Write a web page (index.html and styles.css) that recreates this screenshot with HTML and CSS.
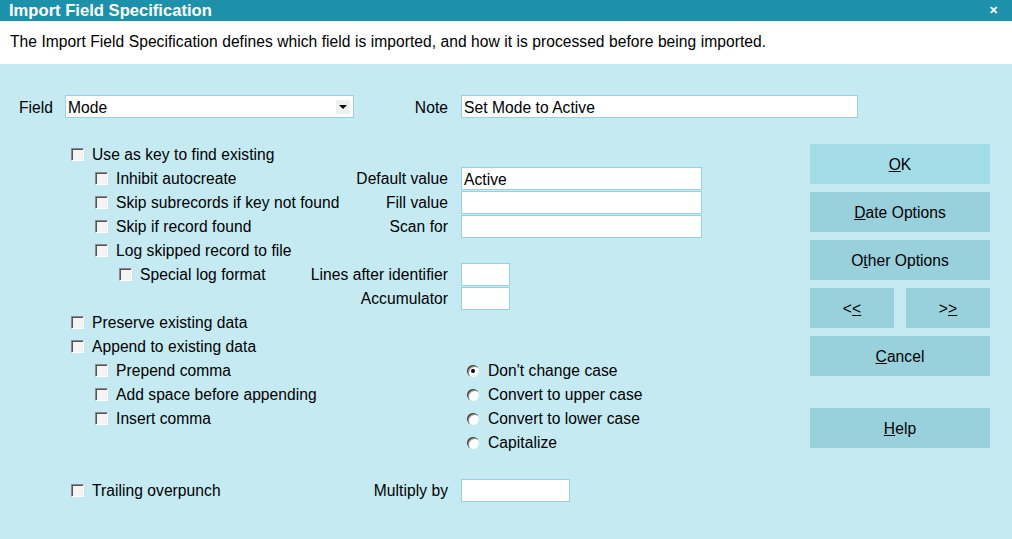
FILE: index.html
```html
<!DOCTYPE html>
<html>
<head>
<meta charset="utf-8">
<link rel="stylesheet" href="styles.css">
</head>
<body>
<div class="window">
  <div class="titlebar">
    <span class="title">Import Field Specification</span>
    <span class="close">&#x2715;</span>
  </div>
  <div class="desc">The Import Field Specification defines which field is imported, and how it is processed before being imported.</div>
  <div class="content">
    <div class="fieldrow">
      <span class="flabel">Field</span>
      <div class="combo"><span class="combo-text">Mode</span><span class="combo-btn"><span class="tri"></span></span></div>
      <span class="rlabel">Note</span>
      <div class="input note">Set Mode to Active</div>
    </div>
    <div class="main">
      <div class="form">
        <div class="cell"><label class="cb l0"><span class="box"></span>Use as key to find existing</label></div>
        <div class="cell2"></div>

        <div class="cell"><label class="cb l1"><span class="box"></span>Inhibit autocreate</label><span class="rlabel">Default value</span></div>
        <div class="cell2"><div class="input w241">Active</div></div>

        <div class="cell"><label class="cb l1"><span class="box"></span>Skip subrecords if key not found</label><span class="rlabel">Fill value</span></div>
        <div class="cell2"><div class="input w241"></div></div>

        <div class="cell"><label class="cb l1"><span class="box"></span>Skip if record found</label><span class="rlabel">Scan for</span></div>
        <div class="cell2"><div class="input w241"></div></div>

        <div class="cell"><label class="cb l1"><span class="box"></span>Log skipped record to file</label></div>
        <div class="cell2"></div>

        <div class="cell"><label class="cb l2"><span class="box"></span>Special log format</label><span class="rlabel">Lines after identifier</span></div>
        <div class="cell2"><div class="input w49"></div></div>

        <div class="cell"><span class="rlabel">Accumulator</span></div>
        <div class="cell2"><div class="input w49"></div></div>

        <div class="cell"><label class="cb l0"><span class="box"></span>Preserve existing data</label></div>
        <div class="cell2"></div>

        <div class="cell"><label class="cb l0"><span class="box"></span>Append to existing data</label></div>
        <div class="cell2"></div>

        <div class="cell"><label class="cb l1"><span class="box"></span>Prepend comma</label></div>
        <div class="cell2"><label class="rb"><span class="radio on"></span>Don't change case</label></div>

        <div class="cell"><label class="cb l1"><span class="box"></span>Add space before appending</label></div>
        <div class="cell2"><label class="rb"><span class="radio"></span>Convert to upper case</label></div>

        <div class="cell"><label class="cb l1"><span class="box"></span>Insert comma</label></div>
        <div class="cell2"><label class="rb"><span class="radio"></span>Convert to lower case</label></div>

        <div class="cell"></div>
        <div class="cell2"><label class="rb"><span class="radio"></span>Capitalize</label></div>

        <div class="cell"></div>
        <div class="cell2"></div>

        <div class="cell"><label class="cb l0"><span class="box"></span>Trailing overpunch</label><span class="rlabel">Multiply by</span></div>
        <div class="cell2"><div class="input w109"></div></div>
      </div>
      <div class="buttons">
        <div class="btn default"><span class="u">O</span>K</div>
        <div class="btn"><span class="u">D</span>ate Options</div>
        <div class="btn">O<span class="u">t</span>her Options</div>
        <div class="btnpair">
          <div class="btn half">&lt;<span class="u">&lt;</span></div>
          <div class="btn half">&gt;<span class="u">&gt;</span></div>
        </div>
        <div class="btn"><span class="u">C</span>ancel</div>
        <div class="btn help"><span class="u">H</span>elp</div>
      </div>
    </div>
  </div>
</div>
</body>
</html>
```

FILE: styles.css
```css
* { box-sizing: border-box; }
html, body {
  margin: 0;
  padding: 0;
}
body {
  width: 1012px;
  height: 539px;
  overflow: hidden;
  font-family: "Liberation Sans", Arial, sans-serif;
  font-size: 15.6px;
  letter-spacing: 0.05px;
  color: #000;
  background: #c5eaf2;
}
.window {
  display: flex;
  flex-direction: column;
  height: 539px;
}
.titlebar {
  height: 21px;
  background: #1e91aa;
  color: #fff;
  display: flex;
  align-items: center;
  justify-content: space-between;
  padding: 0 14px 0 9px;
}
.title {
  font-weight: bold;
  font-size: 16.6px;
  letter-spacing: 0;
}
.close {
  font-weight: bold;
  font-size: 11px;
}
.desc {
  height: 43px;
  background: #fff;
  display: flex;
  align-items: center;
  padding-left: 10px;
  padding-bottom: 1px;
}
.content {
  flex: 1;
  background: #c5eaf2;
  padding-top: 31px;
}
.fieldrow {
  display: grid;
  grid-template-columns: 46px 289px 107px 397px;
  align-items: center;
  padding-left: 19px;
  height: 23px;
}
.flabel, .fieldrow .rlabel { padding-top: 2px; }
.combo {
  height: 23px;
  background: #fff;
  border: 1px solid #96d3e0;
  display: flex;
  align-items: center;
  justify-content: space-between;
  padding: 0 3px 0 2px;
}
.combo-text { padding-top: 2px; }
.combo-btn {
  width: 14px;
  height: 14px;
  background: #efefef;
  display: flex;
  align-items: center;
  justify-content: center;
}
.tri {
  width: 0;
  height: 0;
  border-left: 4px solid transparent;
  border-right: 4px solid transparent;
  border-top: 4px solid #000;
}
.rlabel {
  margin-left: auto;
  padding-right: 13px;
  text-align: right;
  white-space: nowrap;
}
.input {
  height: 23px;
  background: #fff;
  border: 1px solid #96d3e0;
  padding: 2px 0 0 2px;
  line-height: 19px;
}
.note { width: 397px; }
.main {
  display: flex;
  margin-top: 24px;
}
.form {
  display: grid;
  grid-template-columns: 390px 260px;
  grid-auto-rows: 24px;
  padding-left: 71px;
}
.cell {
  display: flex;
  align-items: center;
  padding-top: 2px;
}
.cell2 {
  display: flex;
  align-items: flex-end;
}
.cell2 .rb { align-self: center; padding-top: 2px; }
.w241 { width: 241px; }
.w49 { width: 49px; }
.w109 { width: 109px; }
.cb {
  display: flex;
  align-items: center;
  gap: 8px;
  white-space: nowrap;
}
.l1 { margin-left: 24px; }
.l2 { margin-left: 48px; }
.box {
  width: 13px;
  height: 13px;
  border: 1px solid;
  border-color: #8a8a8a #ffffff #ffffff #8a8a8a;
  background: #f4f4f4;
  box-shadow: inset 1px 1px 0 #555;
  margin-top: -1px;
  flex: none;
}
.rb {
  display: flex;
  align-items: center;
  gap: 9px;
  margin-left: 6px;
  white-space: nowrap;
}
.radio {
  position: relative;
  width: 12px;
  height: 12px;
  border-radius: 50%;
  background: #fff;
  box-shadow: inset 1px 1px 0 #444, inset 2px 2px 0 #9a9a9a;
  flex: none;
  margin-top: -1px;
}
.radio.on::after {
  content: "";
  position: absolute;
  left: 4px;
  top: 4px;
  width: 4px;
  height: 4px;
  border-radius: 50%;
  background: #000;
}
.buttons {
  margin-left: auto;
  margin-right: 22px;
  padding-top: 2px;
  width: 180px;
  display: flex;
  flex-direction: column;
  gap: 8px;
}
.btn {
  height: 40px;
  background: #98d0dc;
  display: flex;
  align-items: center;
  justify-content: center;
  padding-top: 1px;
}
.btn.default { background: #a2dce6; }
.btnpair {
  display: flex;
  gap: 12px;
}
.btn.half { width: 84px; }
.btn.help { margin-top: 24px; }
.u { text-decoration: underline; }
```
